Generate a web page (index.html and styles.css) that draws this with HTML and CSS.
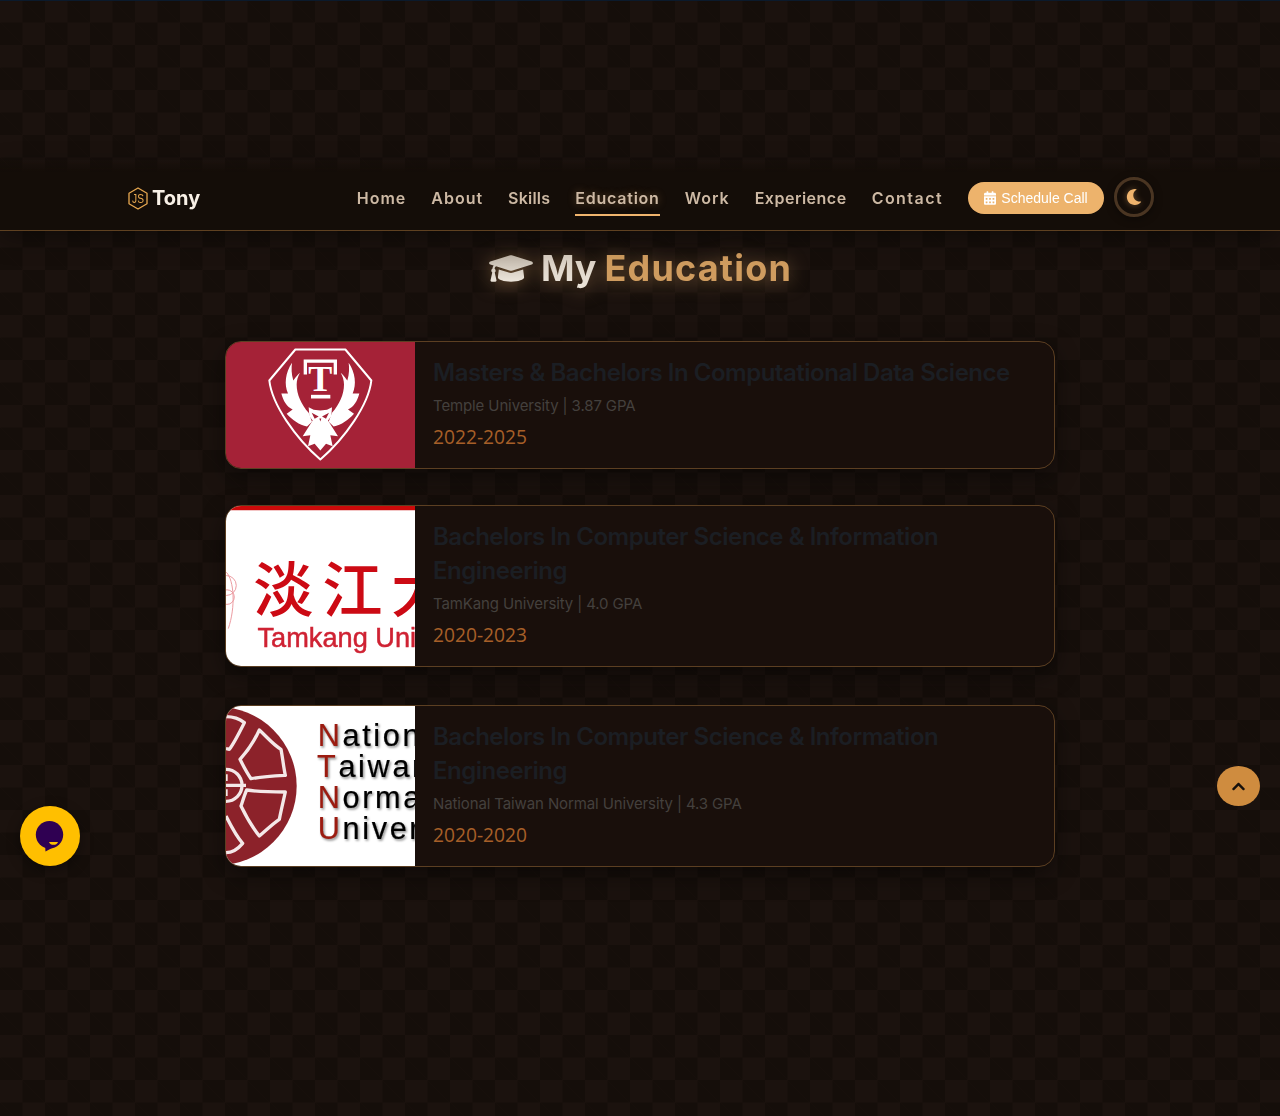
FILE: index.html
```html
<!DOCTYPE html>
<html lang="en">
<head>
<meta charset="utf-8">
<title>Tony - Education</title>
<link rel="stylesheet" href="styles.css">
</head>
<body>
<div class="progress"></div>
<header class="site-header">
  <nav class="navbar">
    <a class="brand">
      <svg class="brand-icon" viewBox="0 0 20 23"><polygon points="10,1 19,6.200 19,16.800 10,22 1,16.800 1,6.200" fill="none" stroke="#e8a850" stroke-width="1.300" stroke-linejoin="round"/><text transform="translate(10 16) scale(.78 1)" class="brand-js">JS</text></svg>
      <span>Tony</span>
    </a>
    <ul class="nav-links">
      <li>Home</li>
      <li>About</li>
      <li>Skills</li>
      <li class="active">Education</li>
      <li>Work</li>
      <li>Experience</li>
      <li>Contact</li>
    </ul>
    <a class="schedule">
      <svg class="cal-icon" viewBox="0 0 448 512"><path fill="currentColor" d="M0 464c0 26.500 21.500 48 48 48h352c26.500 0 48-21.500 48-48V192H0v272zm320-196c0-6.600 5.400-12 12-12h40c6.600 0 12 5.400 12 12v40c0 6.600-5.400 12-12 12h-40c-6.600 0-12-5.400-12-12v-40zm0 128c0-6.600 5.400-12 12-12h40c6.600 0 12 5.400 12 12v40c0 6.600-5.400 12-12 12h-40c-6.600 0-12-5.400-12-12v-40zM192 268c0-6.600 5.400-12 12-12h40c6.600 0 12 5.400 12 12v40c0 6.600-5.400 12-12 12h-40c-6.600 0-12-5.400-12-12v-40zm0 128c0-6.600 5.400-12 12-12h40c6.600 0 12 5.400 12 12v40c0 6.600-5.400 12-12 12h-40c-6.600 0-12-5.400-12-12v-40zM64 268c0-6.600 5.400-12 12-12h40c6.600 0 12 5.400 12 12v40c0 6.600-5.400 12-12 12H76c-6.600 0-12-5.400-12-12v-40zm0 128c0-6.600 5.400-12 12-12h40c6.600 0 12 5.400 12 12v40c0 6.600-5.400 12-12 12H76c-6.600 0-12-5.400-12-12v-40zM400 64h-48V16c0-8.800-7.200-16-16-16h-32c-8.800 0-16 7.200-16 16v48H160V16c0-8.800-7.200-16-16-16h-32c-8.800 0-16 7.200-16 16v48H48C21.500 64 0 85.500 0 112v48h448v-48c0-26.500-21.500-48-48-48z"/></svg>
      Schedule Call
    </a>
    <button class="theme" aria-label="Toggle theme">
      <svg class="moon-icon" viewBox="0 0 512 512"><path fill="currentColor" d="M283.211 512c78.962 0 151.079-35.925 198.857-94.792 7.068-8.708-.639-21.430-11.562-19.350-124.203 23.654-238.262-71.576-238.262-196.954 0-72.222 38.662-138.635 101.498-174.394 9.686-5.512 7.250-20.197-3.756-22.230A258.156 258.156 0 0 0 283.211 0c-141.309 0-256 114.511-256 256 0 141.309 114.511 256 256 256z"/></svg>
    </button>
  </nav>
</header>

<main class="education">
  <h1 class="heading">
    <svg class="cap-icon" viewBox="0 0 640 512">
      <defs><linearGradient id="capfill" x1="0" y1="0" x2="0" y2="1"><stop offset="0" stop-color="#bfb5a8"/><stop offset="1" stop-color="#ece5db"/></linearGradient></defs>
      <path fill="url(#capfill)" d="M622.340 153.200L343.400 67.500c-15.200-4.670-31.600-4.670-46.790 0L17.660 153.200c-23.540 7.230-23.540 38.360 0 45.590l48.630 14.940c-10.670 13.190-17.230 29.280-17.880 46.900C38.780 266.150 32 276.110 32 288c0 10.780 5.680 19.850 13.860 25.650L20.330 428.530C18.110 438.520 25.710 448 35.940 448h56.110c10.240 0 17.840-9.480 15.620-19.470L82.140 313.650C90.320 307.850 96 298.780 96 288c0-11.570-6.470-21.250-15.660-26.870.76-15.020 8.440-28.300 20.690-36.720L296.600 284.500c9.060 2.780 26.440 6.250 46.790 0l278.950-85.700c23.550-7.240 23.550-38.360 0-45.600zM352.790 315.090c-28.530 8.760-52.840 3.920-65.590 0l-145.020-44.550L128 384c0 35.350 85.960 64 192 64s192-28.650 192-64l-14.180-113.470-145.030 44.560z"/>
    </svg>
    <span class="h-my">My</span>
    <span class="h-edu">Education</span>
  </h1>

  <div class="cards">
    <article class="card card-temple">
      <div class="card-img">
        <svg viewBox="-108 -9 567 381" preserveAspectRatio="xMidYMid slice">
          <rect x="-108" y="-9" width="567" height="381" fill="#a52237"/>
          <path class="temple-line" d="M100 15H250L328 108C320 180 250 280 175 345C100 280 30 180 22 108Z"/>
          <path class="temple-white" d="M125 90V45H225V90H215V55H135V90Z"/>
          <text x="175" y="140" class="temple-t">T</text>
          <rect class="temple-white" x="147" y="151" width="58" height="11"/>
          <g>
            <path class="temple-white" d="M90 55C70 85 66 120 78 147L58 147C64 170 74 187 92 195L74 208C90 226 112 242 135 246L150 232L140 205C118 180 104 150 104 120C104 108 108 95 114 85C102 95 97 105 94 108C88 90 88 70 90 55Z"/>
          </g>
          <g transform="matrix(-1 0 0 1 350 0)">
            <path class="temple-white" d="M90 55C70 85 66 120 78 147L58 147C64 170 74 187 92 195L74 208C90 226 112 242 135 246L150 232L140 205C118 180 104 150 104 120C104 108 108 95 114 85C102 95 97 105 94 108C88 90 88 70 90 55Z"/>
          </g>
          <path class="temple-white" d="M140 188L155 196L175 198L195 196L210 188L208 215L198 228L228 275L205 272L212 305L192 298L175 318L158 298L138 305L145 272L122 275L152 228L142 215Z"/>
          <path class="temple-red" d="M149 205L170 216L158 223ZM201 205L180 216L192 223ZM172 222H178L175 231Z"/>
        </svg>
      </div>
      <div class="card-body">
        <h3>Masters &amp; Bachelors In Computational Data Science</h3>
        <p class="school">Temple University | 3.87 GPA</p>
        <p class="date">2022-2025</p>
      </div>
    </article>

    <article class="card card-tamkang">
      <div class="card-img">
        <svg viewBox="15 15 570 483" preserveAspectRatio="xMidYMid slice">
          <rect x="15" y="15" width="570" height="483" fill="#fff"/>
          <rect x="15" y="15" width="570" height="13" fill="#cc0a0a"/>
          <g class="tk-emblem">
            <circle cx="16" cy="255" r="30"/>
            <circle cx="18" cy="290" r="22"/>
            <path d="M16 215C40 240 44 320 22 385"/>
          </g>
          <text x="97" y="335" class="tk-cn">淡江大</text>
          <text x="110" y="440" class="tk-en">Tamkang University</text>
        </svg>
      </div>
      <div class="card-body">
        <h3>Bachelors In Computer Science &amp; Information Engineering</h3>
        <p class="school">TamKang University | 4.0 GPA</p>
        <p class="date">2020-2023</p>
      </div>
    </article>

    <article class="card card-ntnu">
      <div class="card-img">
        <svg viewBox="0 0 567 480" preserveAspectRatio="xMidYMid slice">
          <rect width="567" height="480" fill="#fff"/>
          <circle cx="-26" cy="240" r="238" fill="#8c222a"/>
          <g class="nt-spokes">
            <path d="M100 72C125 95 140 115 165 130C170 155 172 180 178 208C145 210 110 212 75 218C62 200 52 180 42 160C65 135 85 105 100 72Z"/>
            <path d="M62 252C100 258 140 258 178 258C172 285 165 315 160 340C138 355 118 375 100 390C80 365 62 335 45 300C50 285 55 268 62 252Z"/>
            <path d="M0 32C20 32 40 38 55 50C40 80 25 110 10 130L0 128"/>
            <path d="M0 330C10 350 30 390 50 412C35 430 15 440 0 440"/>
            <circle cx="0" cy="238" r="48"/>
            <path d="M0 238H60M0 205V225M0 250V270"/>
          </g>
          <g class="nt-text">
            <text x="275" y="120"><tspan class="nt-red">N</tspan>ational</text>
            <text x="273" y="214"><tspan class="nt-red">T</tspan>aiwan</text>
            <text x="275" y="307"><tspan class="nt-red">N</tspan>ormal</text>
            <text x="275" y="399"><tspan class="nt-red">U</tspan>niversity</text>
          </g>
        </svg>
      </div>
      <div class="card-body">
        <h3>Bachelors In Computer Science &amp; Information Engineering</h3>
        <p class="school">National Taiwan Normal University | 4.3 GPA</p>
        <p class="date">2020-2020</p>
      </div>
    </article>
  </div>
</main>

<a class="to-top" aria-label="Back to top">
  <svg class="chev-icon" viewBox="0 0 448 512"><path fill="currentColor" d="M240.971 130.524l194.343 194.343c9.373 9.373 9.373 24.569 0 33.941l-22.667 22.667c-9.357 9.357-24.522 9.375-33.901.04L224 227.495 69.255 381.516c-9.379 9.335-24.544 9.317-33.901-.04l-22.667-22.667c-9.373-9.373-9.373-24.569 0-33.941L207.030 130.525c9.372-9.373 24.568-9.373 33.941-.001z"/></svg>
</a>

<a class="chat" aria-label="Open chat">
  <svg class="chat-icon" viewBox="0 0 60 60"><circle cx="29.500" cy="28.800" r="13.700" fill="#2f0052"/><path fill="#2f0052" d="M25 39L25.500 45.500L32 42Z"/><path fill="#ffbf00" d="M29 36h9c-.6 2-2.500 2.800-4.500 2.800S29.600 38 29 36Z"/></svg>
</a>
</body>
</html>
```
FILE: styles.css
```css
* { box-sizing: border-box; }
html, body { margin: 0; padding: 0; }
body {
  min-height: 1116px;
  height: 1116px;
  overflow: hidden;
  font-family: "Inter", "Noto Sans", sans-serif;
  color: #e8ddd0;
  background-color: #1b120e;
  background-image:
    linear-gradient(45deg, #150e0a 25%, transparent 25%, transparent 75%, #150e0a 75%),
    linear-gradient(45deg, #150e0a 25%, transparent 25%, transparent 75%, #150e0a 75%);
  background-size: 45px 45px;
  background-position: 0 0, 22.5px 22.5px;
}
.progress {
  position: fixed; top: 0; left: 0; right: 0; height: 1px;
  background: #0b1a2c;
}
.site-header {
  height: 231px;
  padding-top: 160px;
  position: relative;
  z-index: 2;
}
.navbar {
  height: 71px;
  border-bottom: 1px solid #5f4121;
  background: linear-gradient(180deg, rgba(19,12,8,0) 0, #140d08 12px, #140d08 100%);
  box-shadow: 0 8px 24px rgba(0,0,0,.35);
  padding: 17px 126px 0 128px;
  display: flex;
  align-items: flex-start;
}
.brand {
  display: flex; align-items: center; gap: 4px;
  height: 44px;
  font-weight: 700; font-size: 20px; color: #f8f0e6;
  margin-right: auto;
  margin-top: -1px;
}
.brand-icon { width: 20px; height: 23px; }
.brand-js { font: 400 13px "Liberation Sans", sans-serif; fill: #e8a850; text-anchor: middle; }
.nav-links {
  list-style: none; margin: 0; padding: 0;
  display: flex; gap: 25px;
  font-weight: 600; font-size: 16px; letter-spacing: 1px;
  color: #cdb9a4;
}
.nav-links li {
  height: 39px; line-height: 42px;
  border-bottom: 2px solid transparent;
}
.nav-links li:nth-child(3) { letter-spacing: .2px; }
.nav-links li:nth-child(4) { letter-spacing: .78px; }
.nav-links li:nth-child(5) { letter-spacing: 1px; }
.nav-links li:nth-child(6) { letter-spacing: .5px; }
.nav-links li:nth-child(7) { letter-spacing: 1.45px; }
.nav-links li.active {
  border-bottom-color: #f0b46d;
  text-shadow: 0 0 8px rgba(240,180,109,.35);
}
.schedule {
  margin: 5px 0 0 25px;
  height: 32px; width: 136px;
  border-radius: 16px;
  background: #edb36c;
  color: #fff;
  font: 400 14px/32px "Liberation Sans", Arial, sans-serif;
  display: flex; align-items: center; justify-content: center; gap: 5px;
}
.cal-icon { width: 12px; height: 14px; }
.theme {
  margin-left: 10px;
  width: 40px; height: 40px;
  border-radius: 50%;
  border: 3px solid #4a3522;
  background: transparent;
  color: #f0b46d;
  padding: 0;
  display: flex; align-items: center; justify-content: center;
  box-shadow: 0 2px 8px rgba(0,0,0,.4);
}
.moon-icon { width: 16px; height: 16px; filter: drop-shadow(0 0 3px rgba(240,180,109,.4)); }
.education { padding-top: 11px; }
.heading {
  margin: 0; height: 52px;
  display: flex; align-items: center; justify-content: center; gap: 8px;
  font-size: 36px; font-weight: 700; line-height: 52px;
  filter: drop-shadow(0 2px 9px rgba(207,156,95,.5));
}
.cap-icon { width: 44px; height: 35px; margin-left: 1px; }
.h-my {
  background: linear-gradient(180deg, #cfc4b6, #f0e9df);
  -webkit-background-clip: text; background-clip: text;
  color: transparent;
}
.h-edu { color: #cf9c5f; letter-spacing: 1.2px; }
.cards {
  width: 830px; margin: 47px auto 0;
  display: flex; flex-direction: column; gap: 38px;
}
.card {
  display: flex;
  border: 1px solid #5c3f22;
  border-radius: 16px;
  overflow: hidden;
  background: #190f0b;
  box-shadow: 0 8px 24px rgba(0,0,0,.45);
}
.card-temple { height: 128px; margin-bottom: -2px; }
.card-tamkang, .card-ntnu { height: 162px; }
.card-img { width: 189px; flex: none; }
.card-img svg { display: block; width: 100%; height: 100%; }
.card-body { padding: 14px 18px; flex: 1; min-width: 0; }
.card-body h3 {
  margin: 0;
  font-size: 24px; font-weight: 600; line-height: 34px; letter-spacing: -.48px;
  color: #1b1e23;
}
.school {
  margin: 5px 0 0;
  font-size: 15px; line-height: 22px; letter-spacing: -.12px;
  color: #44403d;
}
.date {
  margin: 7px 0 0;
  font-family: "Open Sans", "Noto Sans", sans-serif;
  font-size: 19.2px; line-height: 26px;
  color: #a65f28;
}
.temple-white { fill: #fff; }
.temple-red { fill: #a52237; }
.temple-line { fill: none; stroke: #fff; stroke-width: 6; stroke-linejoin: round; }
.temple-t { font: 700 108px "Liberation Serif", serif; fill: #fff; text-anchor: middle; }
.tk-emblem { fill: none; stroke: #eb9aa0; stroke-width: 3; }
.tk-cn { font: 500 182px "Noto Sans CJK TC", "Noto Sans CJK SC", sans-serif; fill: #cc0a14; letter-spacing: 26px; filter: blur(.6px); }
.tk-en { font: 400 82px "Liberation Sans", sans-serif; fill: #cf2233; stroke: #cf2233; stroke-width: 1.5; filter: blur(.6px); }
.nt-spokes { fill: none; stroke: #f4e8e8; stroke-width: 10; stroke-linejoin: round; }
.nt-text { font: 400 92px "Liberation Sans", sans-serif; fill: #000; stroke: #000; stroke-width: .6; letter-spacing: 8px; filter: drop-shadow(4px 5px 3px rgba(0,0,0,.45)); }
.nt-red { fill: #9b1b10; stroke: #9b1b10; }
.to-top {
  position: fixed; left: 1217px; top: 766px;
  width: 43px; height: 40px;
  border-radius: 50%;
  background: #cf8c3f;
  color: #15100c;
  display: flex; align-items: center; justify-content: center;
}
.chev-icon { width: 13px; height: 15px; }
.chat {
  position: fixed; left: 20px; top: 806px;
  width: 60px; height: 60px;
  border-radius: 50%;
  background: #ffbf00;
  box-shadow: 0 4px 14px rgba(0,0,0,.4);
  display: flex;
}
.chat-icon { width: 60px; height: 60px; }
```
